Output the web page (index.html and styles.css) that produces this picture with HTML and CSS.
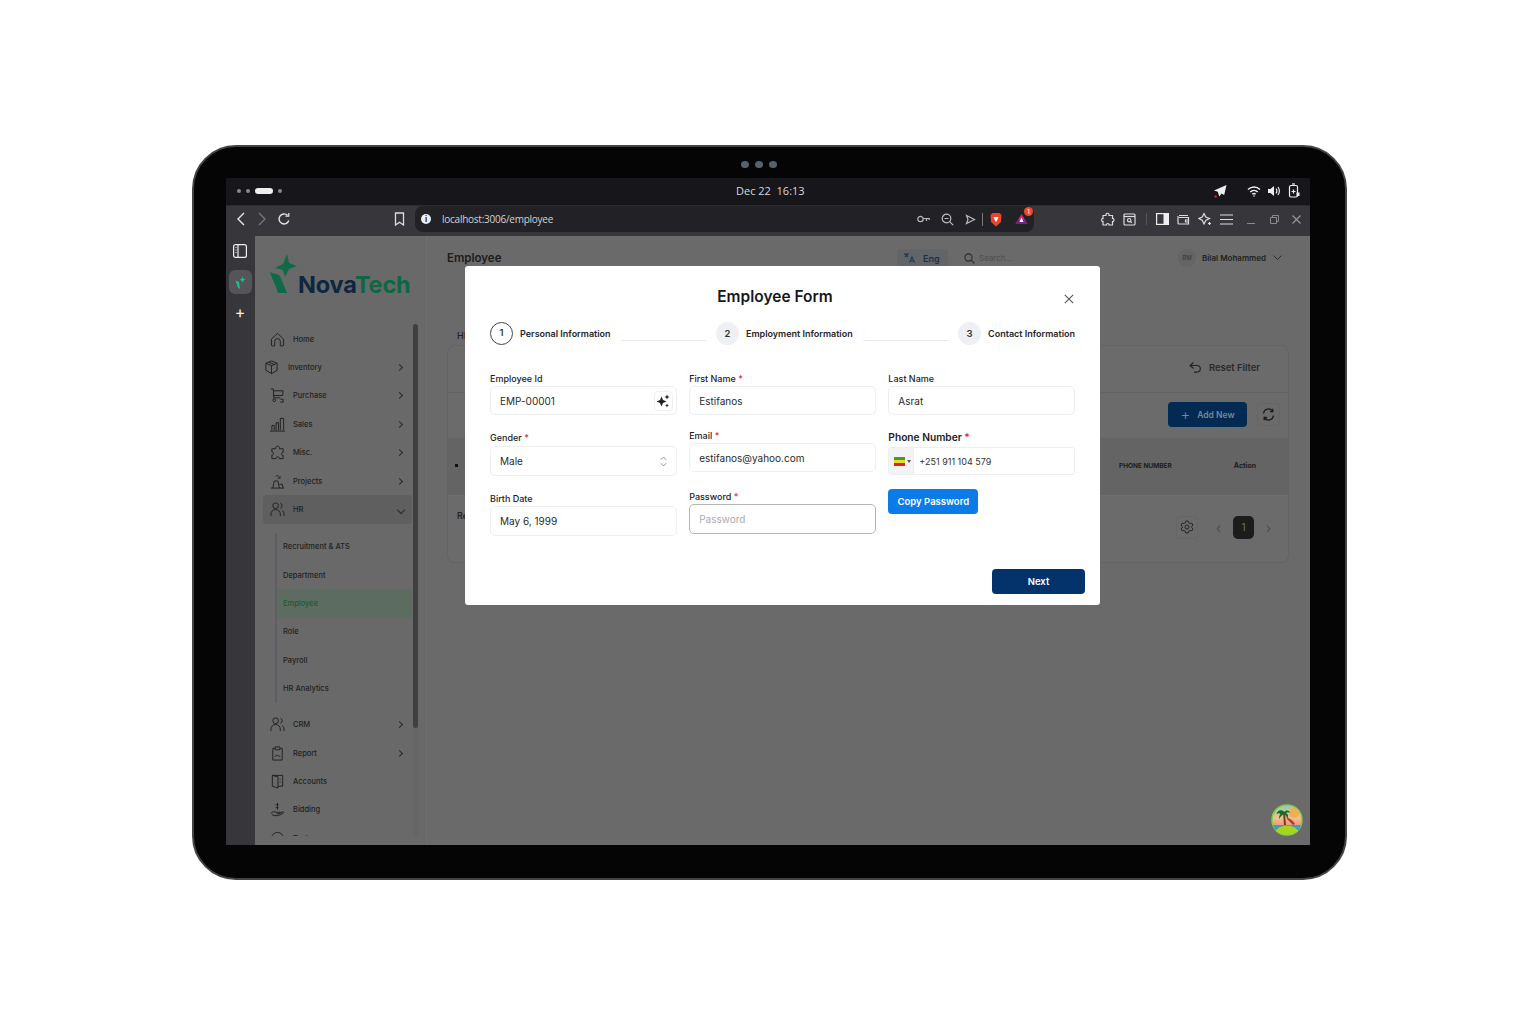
FILE: index.html

```html
<!DOCTYPE html>
<html lang="en">
<head>
  <meta charset="UTF-8">
  <title>Employee Form</title>
  <link rel="stylesheet" href="styles.css">
</head>
<body>

<div class="tablet">
  <div class="camera"><i></i><i></i><i></i></div>
  <div class="screen">

    <!-- system bar -->
    <div class="sysbar">
      <div class="workspaces"><i></i><i></i><b></b><i></i></div>
      <div class="clock">Dec 22&nbsp; 16:13</div>
      <div class="tray">
        <svg class="tray-send" width="14" height="14" viewBox="0 0 14 14"><path d="M13.500 1 1 6.500l3.800 1.300L6.300 12.500l2.200-3 2.700 1.500z" fill="#eee"/><circle cx="2.600" cy="12.500" r="1.200" fill="#d22"/></svg>
        <svg class="tray-wifi" width="14" height="14" viewBox="0 0 14 14" fill="none" stroke="#eee" stroke-width="1.500"><path d="M1 5.500c3.500-3.200 8.500-3.200 12 0M3.200 8c2.200-2 5.400-2 7.600 0M5.300 10.200c1-.9 2.400-.9 3.400 0"/><circle cx="7" cy="12" r=".8" fill="#eee" stroke="none"/></svg>
        <svg class="tray-vol" width="14" height="14" viewBox="0 0 14 14" fill="none" stroke="#eee" stroke-width="1.200"><path d="M1 5v4h2.400L7 12V2L3.400 5z" fill="#eee" stroke="none"/><path d="M9 4.500c1 1.500 1 3.500 0 5M11 3c1.700 2.500 1.700 5.500 0 8"/></svg>
        <svg class="tray-bat" width="12" height="15" viewBox="0 0 12 15" fill="none" stroke="#eee" stroke-width="1.200"><rect x="1.500" y="2.500" width="8" height="11.500" rx="1.500"/><path d="M4 1h3"/><path d="M3.500 8.500h4M5.500 6.500v4"/><path d="M8.500 9.500h3V13h-3z" fill="#eee" stroke="none"/></svg>
      </div>
    </div>

    <!-- browser toolbar -->
    <div class="toolbar">
      <div class="nav-btns">
        <svg width="12" height="14" viewBox="0 0 12 14" fill="none" stroke="#e8e8e8" stroke-width="1.400"><path d="M9 1 3 7l6 6"/></svg>
        <svg width="12" height="14" viewBox="0 0 12 14" fill="none" stroke="#77767b" stroke-width="1.400"><path d="m3 1 6 6-6 6"/></svg>
        <svg width="14" height="14" viewBox="0 0 14 14" fill="none" stroke="#e8e8e8" stroke-width="1.400"><path d="M11.800 8.500A5 5 0 1 1 10.500 3.300"/><path d="M8.500 4.200h3.300V1" stroke-width="1.200"/></svg>
      </div>
      <svg class="bookmark" width="11" height="14" viewBox="0 0 11 14" fill="none" stroke="#ddd" stroke-width="1.300"><path d="M1.500 1h8v12l-4-2.800-4 2.800z"/></svg>
      <div class="urlbar">
        <span class="info">i</span>
        <span class="url">localhost:3006/employee</span>
        <div class="url-icons">
          <svg width="13" height="10" viewBox="0 0 13 10" fill="none" stroke="#bbb" stroke-width="1.200"><circle cx="3.500" cy="5" r="2.700"/><path d="M6.200 4.500h6V6M9.500 4.500V7"/></svg>
          <svg width="13" height="13" viewBox="0 0 13 13" fill="none" stroke="#bbb" stroke-width="1.200"><circle cx="5.500" cy="5.500" r="4.300"/><path d="m8.800 8.800 3.400 3.400M3.500 5.500h4"/></svg>
          <svg width="11" height="11" viewBox="0 0 11 11" fill="none" stroke="#bbb" stroke-width="1.200"><path d="m1.500 1.500 8 4-8 4 1.500-4z"/></svg>
          <span class="url-sep"></span>
          <svg class="brave" width="12" height="15" viewBox="0 0 12 15"><path d="M2.500 1h7l2 2-.5 7L6 14.500 1 10 .5 3z" fill="#e8472b"/><path d="M3.500 5h5L7 8.500 6 10 5 8.500z" fill="#fff"/></svg>
          <span class="rewards">
            <svg width="13" height="12" viewBox="0 0 13 12"><path d="M6.500 1l6 10H.5z" fill="#d0237f"/><path d="M.5 11 4 7h5l3.500 4z" fill="#5a2a91"/><path d="M6.500 4.500 8.500 9h-4z" fill="#fff"/></svg>
            <b>1</b>
          </span>
        </div>
      </div>
      <div class="tool-icons">
        <svg width="14" height="14" viewBox="0 0 14 14" fill="none" stroke="#ddd" stroke-width="1.200"><path d="M5 2.500C5 .8 8 .8 8 2.500v1h3.500v3C13.500 6 13.500 10 11.500 9.500V13H8C8.500 11 5 11 5.500 13H2V9.500C.2 10 .2 6 2 6.500v-3h3z"/></svg>
        <svg width="13" height="13" viewBox="0 0 13 13" fill="none" stroke="#ddd" stroke-width="1.200"><rect x="1" y="1" width="11" height="11" rx="1"/><path d="M1 3.500h11"/><circle cx="6.200" cy="7.200" r="1.700"/><path d="m7.500 8.500 1.300 1.300"/></svg>
        <span class="tool-sep"></span>
        <svg width="13" height="12" viewBox="0 0 13 12"><rect x=".6" y=".6" width="11.800" height="10.800" fill="none" stroke="#eee" stroke-width="1.200"/><rect x="7.500" y="1" width="5" height="10" fill="#eee"/></svg>
        <svg width="13" height="12" viewBox="0 0 13 12" fill="none" stroke="#ddd" stroke-width="1.200"><path d="M2 2.500h9M1 3v7a1 1 0 0 0 1 1h9.500V4.500H2"/><path d="M12 7H8.500v2H12"/></svg>
        <svg width="14" height="14" viewBox="0 0 14 14" fill="none" stroke="#ddd" stroke-width="1.200"><path d="M6 1.500 7.800 5l3.700 1.500L8 8.300 6 12 4.200 8.300.8 6.500 4.300 5z"/><path d="M11.500 10v3M10 11.500h3"/></svg>
        <svg width="13" height="11" viewBox="0 0 13 11" stroke="#ddd" stroke-width="1.100"><path d="M0 1h13M0 5.500h13M0 10h13"/></svg>
      </div>
      <div class="win-btns">
        <svg width="9" height="9" viewBox="0 0 9 9" stroke="#8a898d"><path d="M0 8.500h8"/></svg>
        <svg width="9" height="9" viewBox="0 0 9 9" fill="none" stroke="#8a898d"><path d="M.5 2.500h6v6h-6zM2.500 2.500v-2h6v6h-2"/></svg>
        <svg width="9" height="9" viewBox="0 0 9 9" stroke="#9a999d" stroke-width="1.100"><path d="m.5.5 8 8M8.500.5l-8 8"/></svg>
      </div>
    </div>

    <div class="window">
      <!-- browser side strip -->
      <div class="strip">
        <svg width="14" height="14" viewBox="0 0 14 14" fill="none" stroke="#eee" stroke-width="1.200"><rect x=".6" y=".6" width="12.800" height="12.800" rx="2"/><path d="M5 .6v12.800M2.500 3.500h1M2.500 6h1M2.500 8.500h1"/></svg>
        <span class="strip-tab">
          <svg width="11" height="13" viewBox="0 0 11 13"><path d="M7.500 0 8 2.700 11 3 8.500 4.300 8 7 6.800 4.500 4 4l2.500-1z" fill="#19c586"/><path d="M.5 4.500 4 6l1 7-2-1.500z" fill="#19c586"/></svg>
        </span>
        <span class="strip-plus">+</span>
      </div>

      <!-- app sidebar -->
      <aside class="sidebar">
        <div class="logo">
          <svg class="logo-mark" width="30" height="42" viewBox="0 0 30 42"><path d="M18 2 20 11 28 14 20 17 16 25 14 18 6 16 14 12z" fill="#0f6a47"/><path d="M1 20C5 22 9 22 11 24L18 41H9C7 34 3 27 1 20z" fill="#0f6a47"/></svg>
          <div class="logo-text"><span class="logo-nova">Nova</span><span class="logo-tech">Tech</span></div>
        </div>
        <div class="scroll-track"><div class="scroll-thumb"></div></div>
        <nav class="menu">
          <a class="menu-item">
            <svg class="ico" viewBox="0 0 16 16"><path d="M1.500 7.500 8 1.500l6.500 6V14a.8.8 0 0 1-.8.800H11V10a3 3 0 0 0-6 0v4.800H2.300a.8.8 0 0 1-.8-.8z"/></svg>
            <span class="menu-label">Home</span>
          </a>
          <a class="menu-item tight">
            <svg class="ico" viewBox="0 0 16 16"><path d="M8 1 14 3.500V11L8 14.500 2 11V3.500zM2 3.500 8 6l6-2.500M8 6v8.500M5 2.300l6 2.500"/></svg>
            <span class="menu-label">Inventory</span><span class="chev"></span>
          </a>
          <a class="menu-item">
            <svg class="ico" viewBox="0 0 16 16"><path d="M1 1h2.500L4 10.500h7M3.600 3H14l-.5 5H4M11 12h3M11 15h3l-.1-3"/><circle cx="4.500" cy="13" r="1.500"/></svg>
            <span class="menu-label">Purchase</span><span class="chev"></span>
          </a>
          <a class="menu-item">
            <svg class="ico" viewBox="0 0 16 16"><path d="M0 15h16M2 14V9h2.500v5M6.500 14V6H9v8M11 14V1.500h3.500V14"/></svg>
            <span class="menu-label">Sales</span><span class="chev"></span>
          </a>
          <a class="menu-item">
            <svg class="ico" viewBox="0 0 16 16"><path d="M6 3c0-2.400 4-2.400 4 0v1h4v4c-2-.7-2.500 3.500 0 3v3.500H10c.5-2.500-4-2.500-3.500 0H2v-4c2.300.5 2.300-3.500 0-3V4h4z"/></svg>
            <span class="menu-label">Misc.</span><span class="chev"></span>
          </a>
          <a class="menu-item">
            <svg class="ico" viewBox="0 0 16 16"><path d="M1 15h14M3 15 4.500 7.500h4L10 15M10 11h3l1 4M6 2.500c1-1 2-1 3 0s2 1 3 0M8 5c1-1 2-1 3 0"/></svg>
            <span class="menu-label">Projects</span><span class="chev"></span>
          </a>
          <a class="menu-item open">
            <svg class="ico" viewBox="0 0 16 16"><circle cx="6" cy="4" r="3"/><path d="M1 15v-2a5 5 0 0 1 10 0v2M11 1.200a3 3 0 0 1 0 5.600M13 9a5 5 0 0 1 2 4v2"/></svg>
            <span class="menu-label">HR</span><span class="chev down"></span>
          </a>
          <div class="submenu">
            <a class="sub-item">Recruitment &amp; ATS</a>
            <a class="sub-item">Department</a>
            <a class="sub-item active">Employee</a>
            <a class="sub-item">Role</a>
            <a class="sub-item">Payroll</a>
            <a class="sub-item">HR Analytics</a>
          </div>
          <a class="menu-item">
            <svg class="ico" viewBox="0 0 16 16"><circle cx="6" cy="4" r="3"/><path d="M1 15v-2a5 5 0 0 1 10 0v2M11 1.200a3 3 0 0 1 0 5.600M13 9a5 5 0 0 1 2 4v2"/></svg>
            <span class="menu-label">CRM</span><span class="chev"></span>
          </a>
          <a class="menu-item">
            <svg class="ico" viewBox="0 0 16 16"><path d="M5 2.500H3V15h10V2.500h-2M5.500 1h5v3h-5zM5 11c1.500 0 1.500-1.500 3-1s1 1 3 1"/></svg>
            <span class="menu-label">Report</span><span class="chev"></span>
          </a>
          <a class="menu-item">
            <svg class="ico" viewBox="0 0 16 16"><path d="M2.500 1.500h11V13h-5M2.500 1.500V13l6 2V3zM10.800 5v1M10.800 8v1"/></svg>
            <span class="menu-label">Accounts</span>
          </a>
          <a class="menu-item">
            <svg class="ico" viewBox="0 0 16 16"><path d="M8 1v7M6 3h3M6 6h3M1 12c2-2 4-2 6-1h3c1 0 1 1.500 0 1.500H7M10 12l3.500-1.500c1.500-.3 1.500 1 .5 1.500l-5 2.500H5l-3-1"/></svg>
            <span class="menu-label">Bidding</span>
          </a>
          <a class="menu-item">
            <svg class="ico" viewBox="0 0 16 16"><circle cx="8" cy="8" r="6.500"/></svg>
            <span class="menu-label">Tasks</span>
          </a>
        </nav>
      </aside>

      <!-- page behind the modal -->
      <main class="main">
        <header class="top">
          <h1 class="page-title">Employee</h1>
          <div class="lang">
            <svg width="11" height="10" viewBox="0 0 11 10" fill="none" stroke="#22384f" stroke-width="1.100"><path d="M0 1h5M1 4l3-3M1 1l3 3M5.500 9.500 8 4l2.500 5.500M6.500 8h3"/></svg>
            <span>Eng</span>
          </div>
          <div class="search">
            <svg width="11" height="11" viewBox="0 0 11 11" fill="none" stroke="#2c2c2c" stroke-width="1.100"><circle cx="4.500" cy="4.500" r="3.600"/><path d="m7.300 7.300 3 3"/></svg>
            <span>Search...</span>
          </div>
          <div class="user">
            <span class="avatar">BM</span>
            <span class="user-name">Bilal Mohammed</span>
            <svg width="9" height="6" viewBox="0 0 9 6" fill="none" stroke="#2c2c2c" stroke-width="1"><path d="m.5.500 4 4 4-4"/></svg>
          </div>
        </header>
        <div class="crumb">HR</div>
        <section class="card">
          <div class="filter-row">
            <svg width="12" height="11" viewBox="0 0 12 11" fill="none" stroke="#222" stroke-width="1.100"><path d="M4.500.5 1 3.500l3.500 3M1 3.500h7a3.300 3.300 0 0 1 0 6.600H5"/></svg>
            <span class="reset">Reset Filter</span>
          </div>
          <div class="action-row">
            <button class="add-btn"><span class="plus">+</span>Add New</button>
            <span class="square-btn">
              <svg width="13" height="13" viewBox="0 0 13 13" fill="none" stroke="#1c1c1c" stroke-width="1.300"><path d="M1.500 5.500A5 5 0 0 1 10.500 3M11.500 7.500A5 5 0 0 1 2.500 10M10.800.8v2.700H8M2.200 12.200V9.500H5"/></svg>
            </span>
          </div>
          <div class="table-head">
            <span class="th-dot"></span>
            <span class="th-phone">PHONE NUMBER</span>
            <span class="th-action">Action</span>
          </div>
          <div class="card-foot">
            <span class="foot-label">Re</span>
            <span class="square-btn gear">
              <svg width="14" height="14" viewBox="0 0 14 14" fill="none" stroke="#262626" stroke-width="1"><path d="m5.800 1h2.400l.4 1.700 1.500.9 1.700-.5 1.200 2.100-1.300 1.200v1.200l1.300 1.200-1.200 2.100-1.700-.5-1.500.9L8.200 13H5.800l-.4-1.700-1.500-.9-1.700.5L1 8.800l1.300-1.200V6.400L1 5.200l1.200-2.100 1.700.5 1.500-.9z"/><circle cx="7" cy="7" r="2"/></svg>
            </span>
            <span class="pager-arrow">&lsaquo;</span>
            <span class="page-num">1</span>
            <span class="pager-arrow">&rsaquo;</span>
          </div>
        </section>
      </main>

      <!-- modal -->
      <div class="modal">
        <h2 class="modal-title">Employee Form</h2>
        <svg class="modal-close" width="10" height="10" viewBox="0 0 10 10" stroke="#555" stroke-width="1.100"><path d="m.8.8 8.400 8.400M9.200.8.8 9.200"/></svg>

        <div class="steps">
          <span class="step-num current">1</span>
          <span class="step-text">Personal Information</span>
          <span class="step-line"></span>
          <span class="step-num">2</span>
          <span class="step-text">Employment Information</span>
          <span class="step-line"></span>
          <span class="step-num">3</span>
          <span class="step-text">Contact Information</span>
        </div>

        <div class="form-cols">
          <div class="form-col">
            <div class="field">
              <label class="field-label">Employee Id</label>
              <div class="input">EMP-00001
                <span class="gen-btn">
                  <svg width="14" height="14" viewBox="0 0 14 14" fill="#222"><path d="M5.500 2.500 7 6l3.500 1.500L7 9l-1.500 3.500L4 9 .5 7.500 4 6z"/><path d="m11 .5.8 1.700 1.700.8-1.700.8-.8 1.700-.8-1.700-1.700-.8 1.700-.8zM11 9.500l.6 1.400 1.400.6-1.400.6-.6 1.400-.6-1.400-1.400-.6 1.400-.6z"/></svg>
                </span>
              </div>
            </div>
            <div class="field gender">
              <label class="field-label">Gender <em>*</em></label>
              <div class="input tall">Male
                <svg class="updown" width="7" height="11" viewBox="0 0 7 11" fill="none" stroke="#888" stroke-width=".9"><path d="m.8 3.800 2.700-2.800 2.700 2.800M.8 7.200l2.700 2.800 2.700-2.800"/></svg>
              </div>
            </div>
            <div class="field birth">
              <label class="field-label">Birth Date</label>
              <div class="input tall">May 6, 1999</div>
            </div>
          </div>

          <div class="form-col">
            <div class="field">
              <label class="field-label">First Name <em>*</em></label>
              <div class="input">Estifanos</div>
            </div>
            <div class="field email">
              <label class="field-label">Email <em>*</em></label>
              <div class="input">estifanos@yahoo.com</div>
            </div>
            <div class="field password">
              <label class="field-label">Password <em>*</em></label>
              <div class="input tall focus"><span class="placeholder">Password</span></div>
            </div>
          </div>

          <div class="form-col">
            <div class="field">
              <label class="field-label">Last Name</label>
              <div class="input">Asrat</div>
            </div>
            <div class="field phone">
              <label class="field-label big">Phone Number <em>*</em></label>
              <div class="phone-input">
                <span class="flag-box">
                  <span class="flag"><i class="fg"></i><i class="fy"></i><i class="fr"></i></span>
                  <span class="caret"></span>
                </span>
                <span class="phone-num">+251 911 104 579</span>
              </div>
            </div>
            <button class="copy-btn">Copy Password</button>
          </div>
        </div>

        <div class="modal-foot">
          <button class="next-btn">Next</button>
        </div>
      </div>

      <!-- floating beach badge -->
      <svg class="beach" width="32" height="32" viewBox="0 0 32 32">
        <defs>
          <linearGradient id="sky" x1="0" y1="0" x2="0" y2="1">
            <stop offset="0" stop-color="#8fd0b0"/><stop offset=".45" stop-color="#f3c08a"/><stop offset=".75" stop-color="#ee8a78"/>
          </linearGradient>
        </defs>
        <circle cx="16" cy="16" r="15" fill="url(#sky)" stroke="#7fd04a" stroke-width="1.500"/>
        <circle cx="23" cy="9" r="5" fill="#f0b04e"/>
        <path d="M2 21h28l-2 5H4z" fill="#3a9fc0"/>
        <path d="M5 27c3-7 19-7 22 0-5 5-17 5-22 0z" fill="#a6d520"/>
        <path d="M12 9l1 12h2L14 9z" fill="#7a3b22"/>
        <path d="M13.500 8c-3-3-7-2-8 2 2-1 3-1 4 0-1 1-2 3-1 5 1-3 3-4 4.500-5 1 1 3 2 3 5 2-3 1-5-1-6 1-1 3-1 4 0-1-3-4-3-5.500-1z" fill="#14682c"/>
        <path d="M16 13c3 2 6 3 8 7l-2 1-6-6z" fill="#b53a40"/>
      </svg>
    </div>
  </div>
</div>

</body>
</html>
```

FILE: styles.css

```css
* {
  box-sizing: border-box;
}
body {
  margin: 0;
  height: 1024px;
  padding: 145px 0 0 192px;
  background: #fff;
  font-family: Inter, "Liberation Sans", sans-serif;
  overflow: hidden;
}

/* tablet frame */
.tablet {
  width: 1155px;
  height: 735px;
  padding: 33px 35px 31px 34px;
  background: #050505;
  border: 2px solid #444;
  border-radius: 44px;
  position: relative;
}
.camera {
  position: absolute;
  top: 14px;
  left: 547px;
  display: flex;
  gap: 6px;
}
.camera i {
  width: 8px;
  height: 7px;
  border-radius: 50%;
  background: #55626e;
}
.screen {
  height: 100%;
  margin: -2px 0 0 -2px;
  display: flex;
  flex-direction: column;
  overflow: hidden;
}

/* system bar */
.sysbar {
  height: 27px;
  flex: none;
  display: flex;
  align-items: center;
  background: #17161a;
  padding: 0 10px 2px 11px;
  position: relative;
}
.workspaces {
  display: flex;
  align-items: center;
  gap: 5px;
}
.workspaces i {
  width: 4px;
  height: 4px;
  border-radius: 50%;
  background: #888;
}
.workspaces b {
  width: 18px;
  height: 6px;
  border-radius: 3px;
  background: #eee;
}
.clock {
  position: absolute;
  left: 510px;
  font-family: "Open Sans", sans-serif;
  font-size: 11px;
  color: #d8d8d8;
}
.tray {
  margin-left: auto;
  display: flex;
  align-items: center;
}
.tray-wifi {
  margin-left: 20px;
}
.tray-vol {
  margin-left: 6px;
}
.tray-bat {
  margin-left: 7px;
}

/* browser toolbar */
.toolbar {
  height: 31px;
  flex: none;
  display: flex;
  align-items: center;
  background: #37363b;
  border-top: 1px solid #2b2a2e;
  padding: 0 0 4px 9px;
}
.nav-btns {
  width: 160px;
  display: flex;
  align-items: center;
  gap: 9px;
}
.bookmark {
  margin: 0 10px 0 -1px;
}
.urlbar {
  width: 619px;
  height: 26px;
  flex: none;
  display: flex;
  align-items: center;
  background: #222126;
  border-radius: 8px;
  padding-left: 6px;
}
.info {
  width: 10px;
  height: 10px;
  border-radius: 50%;
  background: #eee;
  color: #222;
  font-size: 8px;
  font-weight: 700;
  line-height: 10px;
  text-align: center;
}
.url {
  margin-left: 11px;
  font-family: "Open Sans", sans-serif;
  font-size: 10px;
  letter-spacing: -.25px;
  color: #d2d2d2;
}
.url-icons {
  margin-left: auto;
  display: flex;
  align-items: center;
  gap: 11px;
  padding-right: 6px;
}
.url-sep {
  width: 1px;
  height: 13px;
  margin-left: -5px;
  background: #777;
}
.brave {
  margin: 0 2px 0 -4px;
}
.rewards {
  position: relative;
  display: flex;
}
.rewards b {
  position: absolute;
  top: -6px;
  right: -5px;
  width: 9px;
  height: 9px;
  border-radius: 50%;
  background: #f04a28;
  color: #fff;
  font-size: 6px;
  font-weight: 500;
  line-height: 9px;
  text-align: center;
}
.tool-icons {
  margin-left: 67px;
  display: flex;
  align-items: center;
  gap: 8px;
}
.tool-sep {
  width: 1px;
  height: 12px;
  background: #555;
  margin: 0 1.5px;
}
.win-btns {
  margin-left: 14px;
  display: flex;
  align-items: center;
  gap: 13.5px;
}

/* content under the toolbar */
.window {
  flex: 1;
  display: flex;
  position: relative;
  background: #6a6a6a;
  min-height: 0;
}
.strip {
  width: 29px;
  flex: none;
  background: #37363b;
  display: flex;
  flex-direction: column;
  align-items: center;
  padding: 8px 1px 0 0;
}
.strip-tab {
  width: 23px;
  height: 24px;
  margin-top: 12px;
  border-radius: 6px;
  background: #555458;
  display: flex;
  align-items: center;
  justify-content: center;
}
.strip-plus {
  margin-top: 10px;
  color: #eee;
  font-size: 16px;
  line-height: 16px;
}

/* app sidebar */
.sidebar {
  width: 172px;
  flex: none;
  position: relative;
  background: #696969;
  border-right: 1px solid #707070;
  padding: 0 0 0 8px;
  overflow: hidden;
}
.logo {
  height: 89px;
  position: relative;
  padding: 36px 0 0 35px;
}
.logo-mark {
  position: absolute;
  left: 6px;
  top: 16px;
}
.logo-text {
  font-size: 23.5px;
  font-weight: 700;
  line-height: 26px;
  letter-spacing: -.2px;
}
.logo-nova {
  color: #0f2640;
}
.logo-tech {
  color: #0e6645;
}
.scroll-track {
  position: absolute;
  left: 158px;
  top: 88px;
  width: 5px;
  height: 512px;
  border-radius: 3px;
  background: #666;
}
.scroll-thumb {
  height: 404px;
  border-radius: 3px;
  background: #3f3f3f;
}
.menu {
  height: 511px;
  overflow: hidden;
}
.menu-item {
  display: flex;
  align-items: center;
  height: 28.4px;
  width: 149px;
  padding: 0 10px 0 7px;
  font-size: 7.5px;
  font-weight: 500;
  color: #222;
}
.ico {
  width: 15px;
  height: 15px;
  flex: none;
  fill: none;
  stroke: #1f1f1f;
  stroke-width: 1;
}
.menu-label {
  margin-left: 8px;
}
.tight {
  padding-left: 1px;
}
.tight .menu-label {
  margin-left: 9px;
}
.chev {
  margin-left: auto;
  width: 5px;
  height: 5px;
  border-top: 1px solid #2a2a2a;
  border-right: 1px solid #2a2a2a;
  transform: rotate(45deg);
}
.chev.down {
  transform: rotate(135deg);
  width: 6px;
  height: 6px;
  margin-right: -2px;
}
.open {
  background: #5f5f5f;
  border-radius: 4px;
}
.submenu {
  margin: 9px 0 8px 12px;
  width: 137px;
  border-left: 2px solid #5e5e68;
}
.sub-item {
  display: flex;
  align-items: center;
  height: 28.3px;
  padding-left: 6px;
  font-size: 7.5px;
  font-weight: 500;
  color: #222;
}
.sub-item.active {
  background: #5c6c60;
  color: #1f5a33;
}

/* page behind the modal */
.main {
  flex: 1;
  min-width: 0;
  padding: 13px 21px 0 20px;
}
.top {
  height: 18px;
  display: flex;
  align-items: center;
}
.page-title {
  margin: 0;
  width: 450px;
  font-size: 11.5px;
  font-weight: 600;
  color: #1c1c1c;
}
.lang {
  width: 51px;
  height: 18px;
  display: flex;
  align-items: center;
  gap: 8px;
  padding-left: 7px;
  background: #626568;
  border-radius: 4px;
  font-size: 9px;
  font-weight: 600;
  color: #1d3044;
}
.search {
  width: 198px;
  margin-left: 14px;
  padding-left: 2px;
  display: flex;
  align-items: center;
  gap: 4px;
  font-size: 8px;
  color: #4f4f4f;
}
.user {
  margin-left: 18px;
  display: flex;
  align-items: center;
}
.avatar {
  width: 18px;
  height: 18px;
  border-radius: 50%;
  background: #646464;
  color: #3f3f3f;
  font-size: 6px;
  font-weight: 600;
  line-height: 18px;
  text-align: center;
}
.user-name {
  margin: 0 7px 0 6px;
  font-size: 8px;
  font-weight: 600;
  color: #222;
}
.crumb {
  margin-top: 63px;
  margin-left: 10px;
  font-size: 9px;
  font-weight: 500;
  color: #222;
}
.card {
  margin-top: 4px;
  width: 842px;
  height: 218px;
  background: #6b6b6b;
  border: 1px solid #646464;
  border-radius: 8px;
}
.filter-row {
  height: 47px;
  display: flex;
  align-items: center;
  justify-content: flex-end;
  gap: 8px;
  padding: 0 28px 4px 0;
  border-bottom: 1px solid #646464;
}
.reset {
  font-size: 9.4px;
  font-weight: 600;
  color: #2a2a2a;
}
.action-row {
  height: 45px;
  display: flex;
  align-items: center;
  justify-content: flex-end;
  gap: 10px;
  padding: 0 8px 2px 0;
}
.add-btn {
  width: 79px;
  height: 25px;
  border: 0;
  border-radius: 4px;
  background: #032a52;
  color: #77879a;
  font: 600 8.5px Inter, sans-serif;
  display: flex;
  align-items: center;
  justify-content: center;
  gap: 7px;
}
.plus {
  font-size: 15px;
  font-weight: 300;
  line-height: 15px;
}
.square-btn {
  width: 23px;
  height: 23px;
  border: 1px solid #666;
  border-radius: 4px;
  display: flex;
  align-items: center;
  justify-content: center;
}
.table-head {
  height: 58px;
  display: flex;
  align-items: center;
  background: #646464;
  border-bottom: 1px solid #6e6e6e;
  padding-bottom: 2px;
  font-size: 6.5px;
  font-weight: 700;
  color: #1c1c1c;
}
.th-dot {
  width: 3px;
  height: 3px;
  margin-left: 7px;
  background: #111;
}
.th-phone {
  margin-left: 661px;
}
.th-action {
  margin-left: 62px;
  font-size: 7px;
}
.card-foot {
  height: 66px;
  display: flex;
  align-items: center;
  padding: 0 2px 4px 0;
  font-size: 9px;
}
.foot-label {
  margin: -23px auto 0 9px;
  font-weight: 600;
  color: #222;
}
.gear {
  width: 22px;
  height: 23px;
  margin-right: 3px;
}
.pager-arrow {
  width: 35px;
  text-align: center;
  font-size: 14px;
  color: #4d4d4d;
}
.page-num {
  width: 21px;
  height: 23px;
  margin: 0 -3px;
  border-radius: 5px;
  background: #1c1c1c;
  color: #6e6e6e;
  font-size: 10px;
  line-height: 23px;
  text-align: center;
}

/* modal */
.modal {
  position: absolute;
  left: 239px;
  top: 30px;
  width: 635px;
  height: 339px;
  background: #fff;
  border-radius: 3px;
  padding: 21px 15px 0 25px;
}
.modal-title {
  margin: 0;
  width: 570px;
  font-size: 15.5px;
  font-weight: 600;
  line-height: 20px;
  text-align: center;
  color: #17171a;
}
.modal-close {
  position: absolute;
  right: 26px;
  top: 28px;
}
.steps {
  width: 585px;
  margin-top: 14px;
  display: flex;
  align-items: center;
  height: 24px;
}
.step-num {
  width: 23px;
  height: 23px;
  flex: none;
  border-radius: 50%;
  background: #eff0f3;
  color: #333;
  font-size: 9.5px;
  font-weight: 600;
  line-height: 23px;
  text-align: center;
}
.step-num.current {
  background: #fff;
  border: 1.5px solid #444;
  line-height: 20px;
}
.step-text {
  margin-left: 7px;
  font-size: 9px;
  font-weight: 600;
  color: #26262a;
  white-space: nowrap;
}
.step-line {
  flex: 1;
  height: 1px;
  margin: 14px 10px 0;
  background: #e4e6ea;
}
.form-cols {
  width: 585px;
  margin-top: 27px;
  display: flex;
  gap: 12.5px;
}
.form-col {
  flex: 1;
  min-width: 0;
}
.field-label {
  display: block;
  height: 13px;
  font-size: 9px;
  font-weight: 500;
  line-height: 13px;
  color: #1c1c1f;
  white-space: nowrap;
}
.field-label em {
  font-style: normal;
  color: #e0263c;
}
.field-label.big {
  font-size: 10.2px;
  font-weight: 600;
  height: 15px;
  line-height: 15px;
}
.input {
  height: 29px;
  margin-top: 1px;
  display: flex;
  align-items: center;
  padding-left: 9px;
  border: 1px solid #eceef1;
  border-radius: 5px;
  font-size: 10px;
  color: #2a2a2e;
  position: relative;
}
.input.tall {
  height: 30px;
}
.input.focus {
  border: 1.5px solid #b4b4b4;
}
.placeholder {
  color: #a9abb0;
}
.gen-btn {
  position: absolute;
  right: 3px;
  top: 4px;
  width: 19px;
  height: 20px;
  border: 1px solid #eff0f2;
  border-radius: 4px;
  display: flex;
  align-items: center;
  justify-content: center;
}
.updown {
  position: absolute;
  right: 9px;
  top: 9px;
}
.gender {
  margin-top: 16px;
}
.gender .input {
  margin-top: 2px;
}
.birth {
  margin-top: 16px;
}
.email {
  margin-top: 14px;
}
.password {
  margin-top: 18px;
}
.phone {
  margin-top: 15px;
}
.phone-input {
  height: 28px;
  margin-top: 2px;
  display: flex;
  align-items: center;
  border: 1px solid #eceef1;
  border-radius: 3px;
}
.flag-box {
  width: 25px;
  height: 100%;
  display: flex;
  align-items: center;
  gap: 2px;
  padding-left: 5px;
  background: #f3f3f3;
  border-right: 1px solid #eceef1;
}
.flag {
  width: 11px;
  display: flex;
  flex-direction: column;
}
.flag i {
  height: 3px;
}
.fg {
  background: #3f9c35;
}
.fy {
  background: #eadb2a;
}
.fr {
  background: #d8232a;
}
.caret {
  border: 2px solid transparent;
  border-top: 3px solid #555;
  border-bottom: 0;
}
.phone-num {
  margin-left: 5px;
  font-size: 9px;
  color: #333;
}
.copy-btn {
  width: 90px;
  height: 25px;
  margin-top: 14px;
  border: 0;
  border-radius: 4px;
  background: #0a7be8;
  color: #fff;
  font: 600 9.5px Inter, sans-serif;
}
.modal-foot {
  position: absolute;
  right: 15px;
  top: 303px;
}
.next-btn {
  width: 93px;
  height: 25px;
  border: 0;
  border-radius: 4px;
  background: #03336a;
  color: #fff;
  font: 600 9.5px Inter, sans-serif;
}

.beach {
  position: absolute;
  right: 7px;
  bottom: 9px;
}
```
